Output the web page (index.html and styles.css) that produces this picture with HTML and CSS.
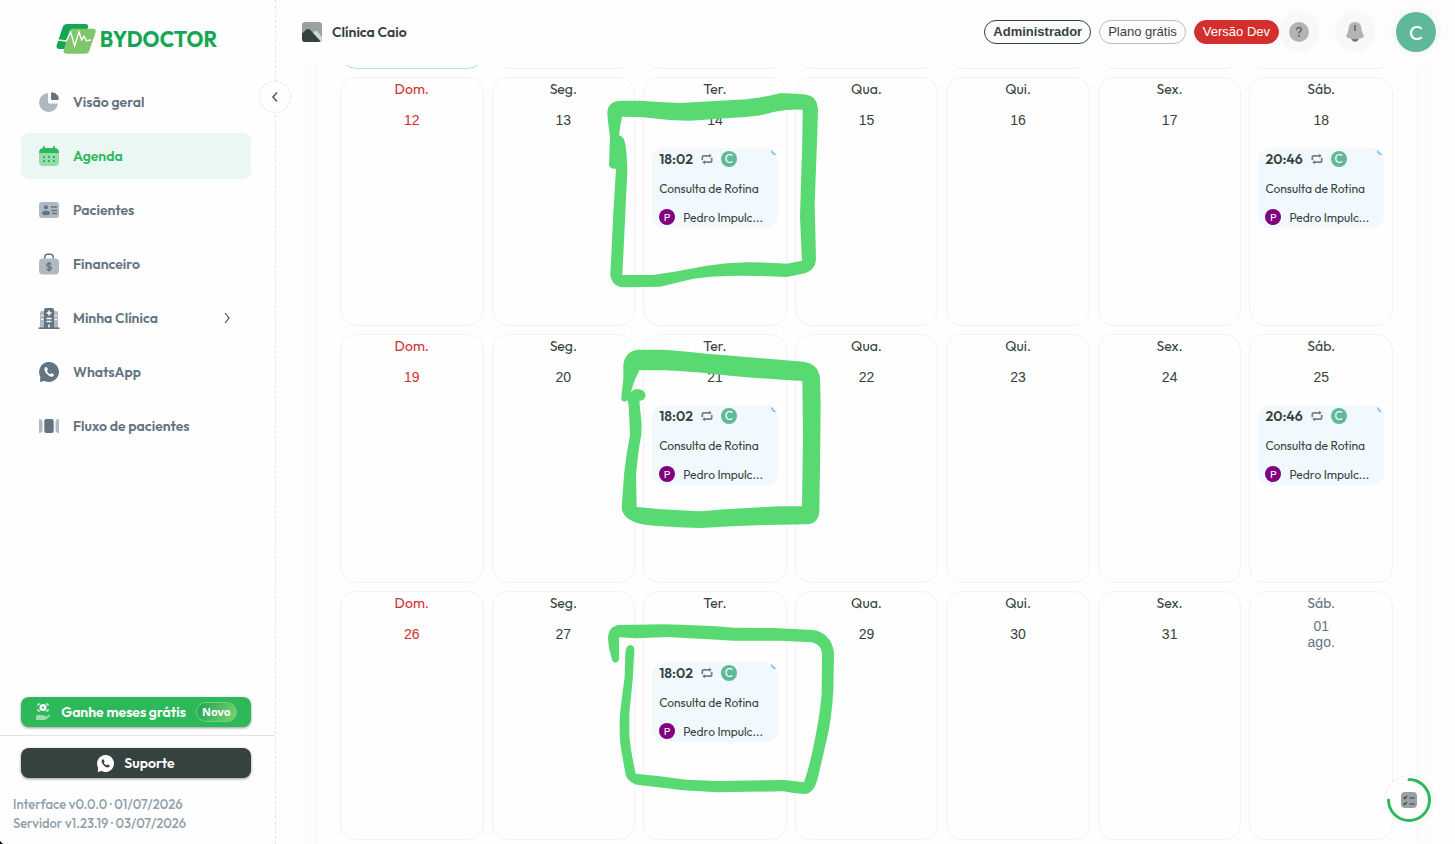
FILE: index.html
```html
<!DOCTYPE html>
<html lang="pt-BR">
<head>
  <meta charset="UTF-8" />
  <title>BYDOCTOR - Agenda</title>
  <meta name="viewport" content="width=device-width, initial-scale=1.0">
  <link rel="stylesheet" href="styles.css">
</head>
<body>
  <svg class="defs" width="0" height="0" aria-hidden="true">
    <symbol id="whatsapp" viewBox="0 0 20 20">
      <path fill="currentColor" fill-rule="evenodd" d="M10 0a10 10 0 1 1-4.600 18.900L.8 20l.6-5A10 10 0 0 1 10 0ZM6.300 5.300C4.600 6.800 5.500 9.600 7.800 12c2.400 2.400 5.200 3.500 6.700 1.900.7-.8.4-1.400-.2-1.800l-1.300-.8c-.6-.3-.9-.1-1.400.6-.4.4-1.200.1-2.300-1-1.200-1.100-1.500-1.900-1.100-2.400.6-.5.8-.8.500-1.500l-.7-1.300c-.4-.8-.9-1.100-1.700-.4Z"/>
    </symbol>
    <symbol id="repeat" viewBox="0 0 12 12">
      <path d="M1.300 7.200V4.500Q1.300 2.800 3 2.800H9M10.700 4.800v2.700Q10.700 9.200 9 9.200H3" fill="none" stroke="#7c7c7c" stroke-width="1.700"/>
      <path d="M8 .8 10.800 2.800 8 4.800ZM4 7.200 1.200 9.200 4 11.200Z" fill="#7c7c7c"/>
    </symbol>
  </svg>

  <aside class="sidebar">
    <a href="#" class="logo">
      <svg width="40" height="30" viewBox="0 0 120 90">
        <path d="M34 0H88q10 0 8 10L78 66q-3 9-12 9H10Q-1 75 2 64L20 10Q23 0 34 0Z" fill="#16a653"/>
        <path d="M51 14h60q10 0 8 10L100 80q-3 9-12 9H31q-10 0-8-10L39 24q3-10 12-10Z" fill="#82c66c"/>
        <path d="M5 48 31 51 44 24 56 66 69 24 77 48 84 37 91 50 105 48" fill="none" stroke="#fff" stroke-width="4"/>
      </svg>
      <span>BYDOCTOR</span>
    </a>

    <nav class="menu">
      <a href="#" class="menu-item">
        <svg width="20" height="20" viewBox="0 0 20 20"><path d="M9 1v9q0 1.500 1.500 1.500H19A9.500 9.500 0 1 1 9 1Z" fill="#b1b9c0"/><path d="M12 1.500Q12 .2 13.400.2q1.500.3 2 1 1-.7 1.700.7.8.7 1.300 1.100 1.500.8.900 2.100.6 1 .5 1.700-.2 1.200-1.300 1.200h-5Q12 8 12 6.500Z" fill="#637381"/></svg>
        <span>Visão geral</span>
      </a>
      <a href="#" class="menu-item active">
        <svg width="20" height="20" viewBox="0 0 20 20"><path d="M0 7h20v9q0 4-4 4H4q-4 0-4-4Z" fill="#95dbab"/><path d="M0 7q0-4.500 4-5V1q0-1 1-1t1 1v1h8V1q0-1 1-1t1 1v1q4 .5 4 5Z" fill="#2eb85c"/><path d="M4 11h2m3 0h2m3 0h2M4 15h2m3 0h2m3 0h2" stroke="#2eb85c" stroke-width="2"/></svg>
        <span>Agenda</span>
      </a>
      <a href="#" class="menu-item">
        <svg width="20" height="20" viewBox="0 0 20 20"><rect y="2" width="20" height="16" rx="3" fill="#b1b9c0"/><circle cx="7" cy="7.300" r="2.100" fill="#637381"/><ellipse cx="7" cy="13" rx="4" ry="2.200" fill="#637381"/><path d="M12 7h6m-5.500 3.500H18M13 13.500h5" stroke="#637381" stroke-width="1.400"/></svg>
        <span>Pacientes</span>
      </a>
      <a href="#" class="menu-item">
        <svg width="20" height="22" viewBox="0 0 20 22"><rect y="5.500" width="20" height="16" rx="4" fill="#b1b9c0"/><path d="M5.800 5.500V4q0-2.800 2.800-2.800h2.800q2.800 0 2.800 2.800v1.500" fill="none" stroke="#637381" stroke-width="1.500"/><path d="M12.300 11.600Q11.800 10.200 10 10.200t-2.200 1.600 2.200 1.700 2.300 1.900-2.300 1.700-2.300-1.500M10 9v9.500" fill="none" stroke="#637381" stroke-width="1.400"/></svg>
        <span>Financeiro</span>
      </a>
      <a href="#" class="menu-item has-sub">
        <svg width="20" height="21" viewBox="0 0 20 21"><path d="M1 5q0-2 2-2h14q2 0 2 2v15H1Z" fill="#b1b9c0"/><path d="M2 7.500h2.500m-2.500 4h2.500m11-4H18m-2.500 4H18" stroke="#fff" stroke-width="1.200"/><path d="M5 2q0-2 2-2h6q2 0 2 2v18H5Z" fill="#637381"/><path d="M10 2.500v5M7.500 5h5M7.500 10.500h5m-5 3h5M10 16.500V20" stroke="#fff" stroke-width="1.500"/><path d="M-.5 20.200h21" stroke="#637381" stroke-width="1.600"/></svg>
        <span>Minha Clínica</span>
        <svg class="chevron" width="8" height="12" viewBox="0 0 8 12"><path d="m2 1 4 5-4 5" fill="none" stroke="#364240" stroke-width="1.100"/></svg>
      </a>
      <a href="#" class="menu-item">
        <svg width="20" height="20"><use href="#whatsapp"/></svg>
        <span>WhatsApp</span>
      </a>
      <a href="#" class="menu-item">
        <svg width="20" height="20" viewBox="0 0 20 20"><path d="M0 3q3.500 0 3.500 3v8q0 3-3.500 3Zm20 0q-3.500 0-3.500 3v8q0 3 3.500 3Z" fill="#b1b9c0"/><rect x="5.300" y="3" width="9.400" height="14" rx="2" fill="#637381"/></svg>
        <span>Fluxo de pacientes</span>
      </a>
    </nav>

    <div class="promo">
      <button class="side-btn green">
        <svg width="16" height="18" viewBox="0 0 16 18"><path d="M3 1h2m6 0h2v2m0 3v2h-2M5 8H3V6m0-3V1" fill="none" stroke="#fff"/><circle cx="8" cy="4.500" r="3.500" fill="#fff"/><circle cx="8" cy="4.500" r="1.100" fill="#2eb85c"/><path d="M1 13q3-2 5-1l4 .6q1 .5 0 1.400l4-2q2-.4 1 1-3 4-6 4H1Z" fill="#9adcb0"/></svg>
        <span>Ganhe meses grátis</span>
        <span class="novo">Novo</span>
      </button>
    </div>
    <div class="support">
      <button class="side-btn dark">
        <svg width="17" height="17"><use href="#whatsapp"/></svg>
        <span>Suporte</span>
      </button>
    </div>
    <div class="version">
      <div>Interface v0.0.0 · 01/07/2026</div>
      <div>Servidor v1.23.19 · 03/07/2026</div>
    </div>
    <button class="collapse" aria-label="Recolher menu">
      <svg width="8" height="12" viewBox="0 0 8 12"><path d="M6 1.500 2 6l4 4.500" fill="none" stroke="#636363" stroke-width="1.700"/></svg>
    </button>
    <div class="corner"></div>
  </aside>

  <main>
    <header>
      <svg width="20" height="20" viewBox="0 0 20 20"><rect width="20" height="20" rx="3" fill="#9ba0a0"/><path d="m11 11 2-2q1-.7 2 0l5 6v5h-6Z" fill="#d2d5d4"/><path d="M0 11.500 4 7.700q2-1.500 4 0L18.500 19q-.7 1-2 1H3q-3 0-3-3Z" fill="#364240"/></svg>
      <h1>Clínica Caio</h1>
      <div class="chips">
        <span class="chip admin">Administrador</span>
        <span class="chip">Plano grátis</span>
        <span class="chip dev">Versão Dev</span>
      </div>
      <div class="actions">
        <button class="round" aria-label="Ajuda">
          <svg width="20" height="20" viewBox="0 0 20 20"><circle cx="10" cy="10" r="10" fill="#b3b3b3"/><path d="M7.700 7.700Q7.800 5.500 10 5.500t2.300 2q0 1-1.200 1.800-1.100.7-1.100 2.200" fill="none" stroke="#626262" stroke-width="1.500"/><circle cx="10" cy="14" r="1" fill="#626262"/></svg>
        </button>
        <button class="round" aria-label="Notificações">
          <svg width="20" height="20" viewBox="0 0 20 20"><path d="M6 16h8q-1 3.800-4 3.800T6 16Z" fill="#747474"/><path d="M10 0q6 0 6.500 7 .2 3 2 5.500Q20 16 15 16.500 10 18 5 16.500 0 16 1.500 12.500q1.800-2.500 2-5.500Q4 0 10 0Z" fill="#b3b3b3"/><path d="M10 3.500v5" stroke="#626262" stroke-width="1.500" stroke-linecap="round"/></svg>
        </button>
        <button class="avatar">C</button>
      </div>
    </header>

    <div class="scroll">
      <section class="calendar">
        <div class="day today"></div>
        <div class="day"></div>
        <div class="day"></div>
        <div class="day"></div>
        <div class="day"></div>
        <div class="day"></div>
        <div class="day"></div>

        <div class="day sunday"><span class="week">Dom.</span><span class="num">12</span></div>
        <div class="day"><span class="week">Seg.</span><span class="num">13</span></div>
        <div class="day">
          <span class="week">Ter.</span><span class="num">14</span>
          <article class="event">
            <div class="time"><b>18:02</b><svg width="12" height="12"><use href="#repeat"/></svg><span class="dot">C</span></div>
            <p>Consulta de Rotina</p>
            <div class="patient"><span class="dot purple">P</span><span class="name">Pedro Impulc...</span></div>
          </article>
          <svg class="mark mark-1" width="240" height="220" viewBox="0 0 720 660">
            <path fill="#58d972" fill-rule="evenodd" d="M22 100Q22 62 65 62H120Q180 66 240 69L440 58Q500 50 540 40 570 38 620 44 652 50 654 90L652 160 644 370 648 540Q645 570 615 580L560 591Q480 587 420 587 340 587 280 596L180 620 70 622Q36 620 31 585L40 400 48 266Q30 268 27 255L30 170Q24 130 22 100ZM66 110 130 112Q200 122 270 122L400 113Q480 110 520 96 560 86 608 89L607 180 600 410 606 542 560 551Q480 546 440 547 380 548 320 557 240 573 160 585H67L76 400 82 270Q80 200 72 178 66 168 57 166 60 140 66 110Z"/>
          </svg>
        </div>
        <div class="day"><span class="week">Qua.</span><span class="num">15</span></div>
        <div class="day"><span class="week">Qui.</span><span class="num">16</span></div>
        <div class="day"><span class="week">Sex.</span><span class="num">17</span></div>
        <div class="day">
          <span class="week">Sáb.</span><span class="num">18</span>
          <article class="event">
            <div class="time"><b>20:46</b><svg width="12" height="12"><use href="#repeat"/></svg><span class="dot">C</span></div>
            <p>Consulta de Rotina</p>
            <div class="patient"><span class="dot purple">P</span><span class="name">Pedro Impulc...</span></div>
          </article>
        </div>

        <div class="day sunday"><span class="week">Dom.</span><span class="num">19</span></div>
        <div class="day"><span class="week">Seg.</span><span class="num">20</span></div>
        <div class="day">
          <span class="week">Ter.</span><span class="num">21</span>
          <article class="event">
            <div class="time"><b>18:02</b><svg width="12" height="12"><use href="#repeat"/></svg><span class="dot">C</span></div>
            <p>Consulta de Rotina</p>
            <div class="patient"><span class="dot purple">P</span><span class="name">Pedro Impulc...</span></div>
          </article>
          <svg class="mark mark-2" width="240" height="200" viewBox="0 0 720 600">
            <path fill="#58d972" fill-rule="evenodd" d="M70 90Q75 48 115 44H190Q270 50 320 56L440 66 610 80Q655 85 660 130L662 200 660 400 658 530Q655 565 620 568L500 570Q400 574 300 579 200 576 140 570 70 560 65 520L72 420Q78 360 90 300L86 210 82 195Q75 205 65 196 63 190 66 170L70 130ZM118 106 200 106Q300 112 390 122 500 132 607 138L609 300 606 514H540Q400 520 300 529 180 524 110 516L108 420Q114 350 124 300L125 270 118 198Q136 196 137 180 134 162 110 162 95 165 92 174 100 140 118 106Z"/>
          </svg>
        </div>
        <div class="day"><span class="week">Qua.</span><span class="num">22</span></div>
        <div class="day"><span class="week">Qui.</span><span class="num">23</span></div>
        <div class="day"><span class="week">Sex.</span><span class="num">24</span></div>
        <div class="day">
          <span class="week">Sáb.</span><span class="num">25</span>
          <article class="event">
            <div class="time"><b>20:46</b><svg width="12" height="12"><use href="#repeat"/></svg><span class="dot">C</span></div>
            <p>Consulta de Rotina</p>
            <div class="patient"><span class="dot purple">P</span><span class="name">Pedro Impulc...</span></div>
          </article>
        </div>

        <div class="day sunday"><span class="week">Dom.</span><span class="num">26</span></div>
        <div class="day"><span class="week">Seg.</span><span class="num">27</span></div>
        <div class="day">
          <span class="week">Ter.</span><span class="num">28</span>
          <article class="event">
            <div class="time"><b>18:02</b><svg width="12" height="12"><use href="#repeat"/></svg><span class="dot">C</span></div>
            <p>Consulta de Rotina</p>
            <div class="patient"><span class="dot purple">P</span><span class="name">Pedro Impulc...</span></div>
          </article>
          <svg class="mark mark-3" width="240" height="210" viewBox="0 0 720 630">
            <path fill="#58d972" d="M24 145Q25 108 58 105L190 103Q300 105 400 113L520 114 640 120Q695 130 702 190L700 300Q695 390 680 450L652 570Q640 612 612 612 580 610 550 604L350 607 250 601 110 584Q80 575 76 550L62 470Q57 430 60 370L74 260 76 190Q78 165 92 165 104 168 103 180L98 270 88 370V440Q95 500 107 551L180 559 260 569 350 573 555 570 612 577Q625 540 636 490 660 380 665 310L666 190Q665 165 636 157L540 152H400Q300 146 200 141L110 145 57 142V210Q48 225 37 212L27 175Z"/>
          </svg>
        </div>
        <div class="day"><span class="week">Qua.</span><span class="num">29</span></div>
        <div class="day"><span class="week">Qui.</span><span class="num">30</span></div>
        <div class="day"><span class="week">Sex.</span><span class="num">31</span></div>
        <div class="day other"><span class="week">Sáb.</span><span class="num">01<br>ago.</span></div>
      </section>
    </div>
  </main>

  <button class="tasks" aria-label="Tarefas">
    <svg width="48" height="48" viewBox="0 0 48 48"><path d="M24 3.500A20.500 20.500 0 1 1 3.500 24" fill="none" stroke="#2eb85c" stroke-width="3" stroke-linecap="round"/><rect x="16" y="16" width="16" height="16" rx="4" fill="#9ba0a0"/><path d="m18.500 21.500 1.200 1.200 2.300-2.700m-3.500 7.500 1.200 1.200L22 26m2.500-4h5m-5 6h5" fill="none" stroke="#364240" stroke-width="1.200"/></svg>
  </button>
</body>
</html>
```
FILE: styles.css
```css
* {
  box-sizing: border-box;
}
body {
  margin: 0;
  height: 100vh;
  display: flex;
  overflow: hidden;
  font-family: Outfit, Lato, sans-serif;
  background: #fefefe;
  color: #364240;
}
a {
  color: inherit;
  text-decoration: none;
}
button {
  font-family: inherit;
  border: none;
  padding: 0;
  cursor: pointer;
}
svg {
  flex-shrink: 0;
  overflow: visible;
}
.defs {
  position: absolute;
}

/* sidebar */
.sidebar {
  position: relative;
  z-index: 2;
  width: 276px;
  flex-shrink: 0;
  display: flex;
  flex-direction: column;
  border-right: 1px dashed #e3e5e6;
  background: #fefefe;
}
.logo {
  display: flex;
  align-items: center;
  justify-content: center;
  gap: 4px;
  height: 30px;
  margin: 24px 2px 25px 0;
  font-size: 21px;
  font-weight: 700;
  color: #16a653;
}
.menu {
  display: flex;
  flex-direction: column;
  gap: 8px;
  padding: 0 24px 0 21px;
}
.menu-item {
  display: flex;
  align-items: center;
  gap: 14px;
  height: 46px;
  padding: 0 18px;
  border-radius: 8px;
  font-size: 14px;
  font-weight: 600;
  color: #637381;
}
.menu-item.active {
  background: #ebf7f3;
  color: #2eb85c;
}
.chevron {
  margin-left: auto;
  margin-right: 2px;
}
.promo {
  margin-top: auto;
  padding: 0 24px 8px 21px;
  border-bottom: 1px solid #dfe1e2;
}
.support {
  padding: 12px 24px 0 21px;
}
.side-btn {
  display: flex;
  align-items: center;
  justify-content: center;
  gap: 10px;
  width: 100%;
  height: 30px;
  border-radius: 8px;
  font-size: 14px;
  font-weight: 600;
  color: #fff;
  box-shadow: 0 1px 3px rgba(0, 0, 0, 0.4);
}
.green {
  background: #2eb85c;
}
.dark {
  background: #364240;
}
.novo {
  height: 20px;
  padding: 0 5px;
  border: 1px solid #73ce7f;
  border-radius: 10px;
  background: linear-gradient(120deg, #1ca05a, #7bd66b);
  font: 700 11px/18px "Noto Sans", sans-serif;
}
.version {
  padding: 17px 13px 11px;
  font-size: 13px;
  line-height: 19px;
  font-weight: 500;
  color: #919eab;
}
.collapse {
  position: absolute;
  top: 81px;
  right: -16px;
  width: 32px;
  height: 32px;
  display: flex;
  align-items: center;
  justify-content: center;
  border: 1px dashed #e3e5e6;
  border-radius: 50%;
  background: #fefefe;
}
.corner {
  position: absolute;
  left: 0;
  bottom: 0;
  width: 6px;
  height: 6px;
  background: radial-gradient(circle at 100% 0, transparent 6px, #000 7px);
}

/* header */
main {
  flex: 1;
  min-width: 0;
  display: flex;
  flex-direction: column;
}
header {
  position: relative;
  z-index: 1;
  flex-shrink: 0;
  display: flex;
  align-items: center;
  height: 65px;
  padding: 0 19px 1px 26px;
  background: linear-gradient(#fcfcfc, #fefefe);
}
h1 {
  margin: 0 auto 0 10px;
  font-size: 14px;
  font-weight: 600;
}
.chips {
  display: flex;
  gap: 8px;
}
.chip {
  height: 24px;
  padding: 0 8px;
  border: 1px solid #b9bdbc;
  border-radius: 12px;
  font: 13px/22px "Liberation Sans", sans-serif;
}
.admin {
  border-color: #364240;
  font-weight: 700;
}
.dev {
  border-color: #d32f2f;
  background: #d32f2f;
  color: #fff;
}
.actions {
  display: flex;
  align-items: center;
  gap: 16px;
}
.round {
  display: flex;
  align-items: center;
  justify-content: center;
  width: 40px;
  height: 40px;
  border-radius: 50%;
  background: #f8f8f8;
}
.avatar {
  width: 40px;
  height: 40px;
  margin-left: 5px;
  border-radius: 50%;
  background: #5fb999;
  box-shadow: 0 0 0 5px #f8f8f8;
  color: #fff;
  font-size: 20px;
}

/* calendar */
.scroll {
  flex: 1;
  min-height: 0;
  overflow: hidden;
  padding: 0 37px 0 40px;
}
.calendar {
  display: grid;
  grid-template-columns: repeat(7, minmax(0, 1fr));
  grid-auto-rows: 249px;
  gap: 8px;
  margin-top: -245px;
  padding: 0 24px 24px 23px;
  border: solid #f5f7f7;
  border-width: 0 1px;
  background: #fefefe;
  box-shadow: 0 0 24px rgba(60, 100, 90, 0.03);
}
.day {
  position: relative;
  display: flex;
  flex-direction: column;
  padding: 0 8px;
  border: 1px solid #f1f3f3;
  border-radius: 16px;
  text-align: center;
}
.today {
  border-color: #b5e4c4;
}
.sunday {
  color: #d32f2f;
}
.other {
  color: #637381;
}
.week {
  height: 23px;
  font-size: 14px;
  line-height: 22px;
}
.num {
  display: flex;
  align-items: center;
  justify-content: center;
  height: 38px;
  font: 14px/16px "Liberation Sans", sans-serif;
}
.event {
  display: flex;
  flex-direction: column;
  justify-content: space-between;
  height: 80px;
  margin-top: 9px;
  padding: 3px 6px 3px 7px;
  border-radius: 12px;
  background: linear-gradient(45deg, transparent 25%, #90caf9 25%, #90caf9 55%, transparent 55%) 119px 2px / 5px 5px no-repeat #f1f8fe;
  text-align: left;
  font-size: 12px;
}
.time {
  display: flex;
  align-items: center;
  gap: 8px;
  height: 16px;
}
.time b {
  font-size: 14px;
  font-weight: 600;
}
.event p {
  margin: 0;
}
.patient {
  display: flex;
  align-items: center;
  gap: 8px;
}
.name {
  white-space: nowrap;
}
.dot {
  width: 16px;
  height: 16px;
  border-radius: 50%;
  background: #5fb999;
  color: #fff;
  font-size: 12px;
  line-height: 16px;
  text-align: center;
}
.purple {
  background: #800080;
  font-size: 11px;
}

/* hand-drawn marks over the tuesday cells */
.mark {
  position: absolute;
  z-index: 1;
  left: -44px;
  pointer-events: none;
}
.mark-1 {
  top: 2px;
}
.mark-2 {
  top: 0;
}
.mark-3 {
  top: -2px;
}

.tasks {
  position: fixed;
  right: 22px;
  bottom: 20px;
  z-index: 3;
  width: 48px;
  height: 48px;
  border-radius: 50%;
  background: #fefefe;
  box-shadow: 0 0 2px rgba(0, 0, 0, 0.15);
}
```
